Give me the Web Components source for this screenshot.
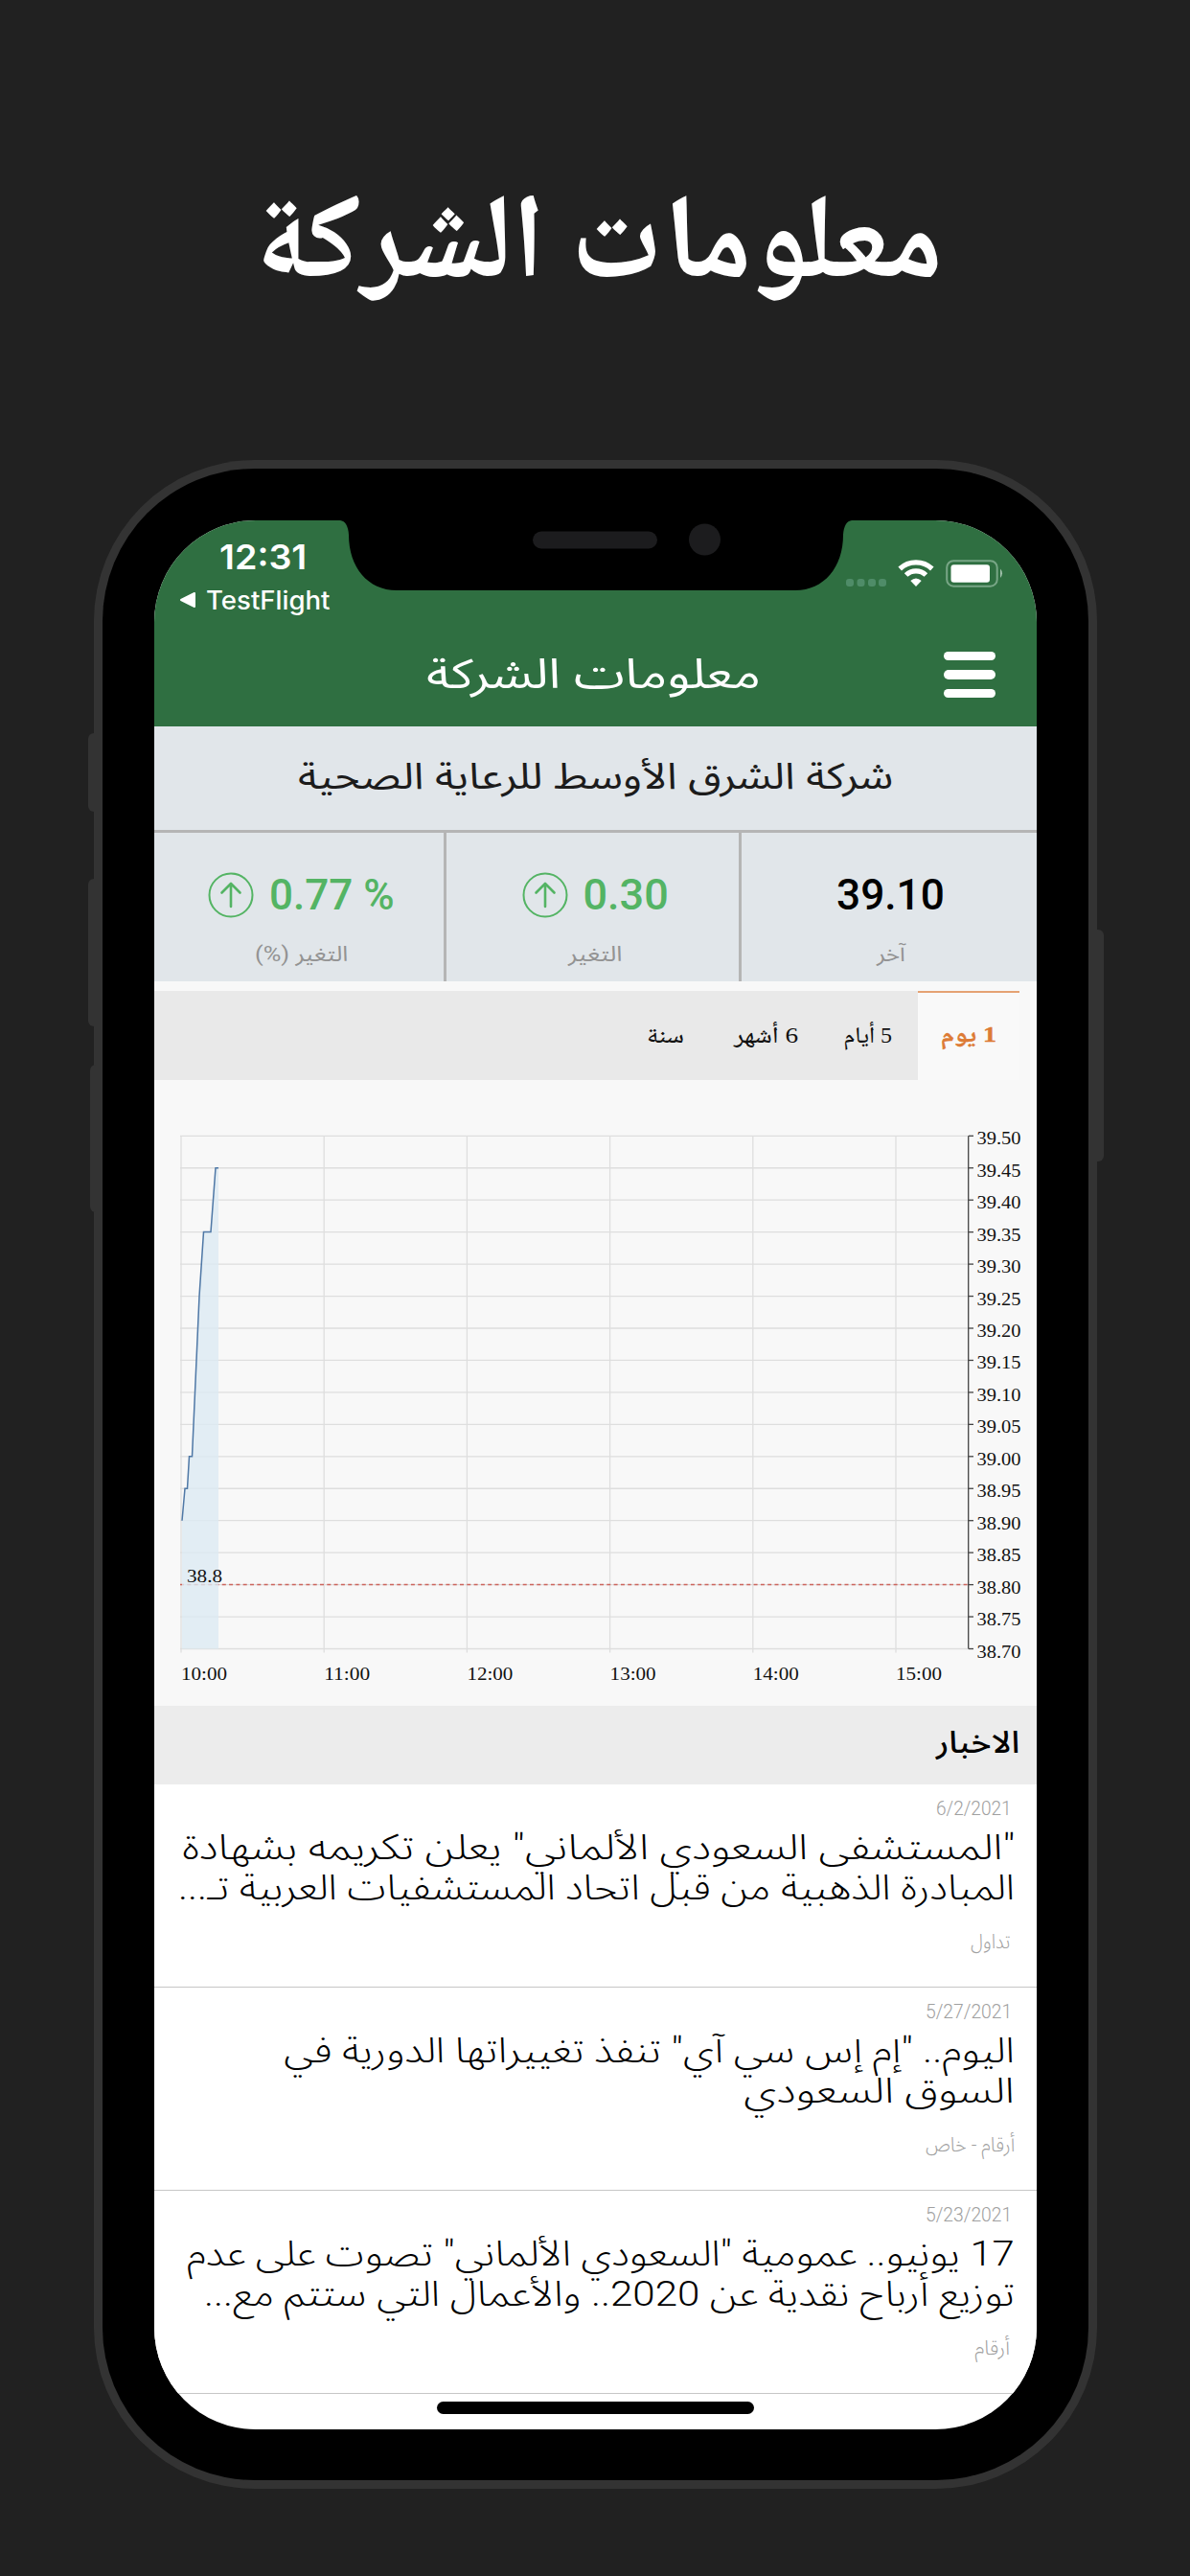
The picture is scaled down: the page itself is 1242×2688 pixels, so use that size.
<!DOCTYPE html>
<html lang="ar">
<head>
<meta charset="utf-8">
<title>معلومات الشركة</title>
<style>
    html, body { margin: 0; padding: 0; }
    body { width: 1242px; height: 2688px; overflow: hidden; background: #212121; }
</style>
</head>
<body>
<promo-headline>معلومات الشركة</promo-headline>
<phone-frame>
    <status-bar time="12:31" back="TestFlight"></status-bar>
    <app-header>معلومات الشركة</app-header>
    <stock-summary name="شركة الشرق الأوسط للرعاية الصحية">
        <stat-cell value="39.10" value-width="113" label="آخر" label-width="30"></stat-cell>
        <stat-cell value="0.30" value-width="89" label="التغير" label-width="57" up></stat-cell>
        <stat-cell value="0.77 %" value-width="131" label="التغير (%)" label-width="97" up></stat-cell>
    </stock-summary>
    <range-tabs></range-tabs>
    <price-chart></price-chart>
    <news-list heading="الاخبار">
        <news-item date="6/2/2021" date-width="79" source="تداول" source-width="41" indent="5">
            <fit-text width="869">"المستشفى السعودي الألماني" يعلن تكريمه بشهادة</fit-text>
            <fit-text width="873">المبادرة الذهبية من قبل اتحاد المستشفيات العربية تـ...</fit-text>
        </news-item>
        <news-item date="5/27/2021" date-width="90" source="أرقام - خاص" source-width="93">
            <fit-text width="763">اليوم.. "إم إس سي آي" تنفذ تغييراتها الدورية في</fit-text>
            <fit-text width="283">السوق السعودي</fit-text>
        </news-item>
        <news-item date="5/23/2021" date-width="90" source="أرقام" source-width="37" indent="5">
            <fit-text width="864">17 يونيو.. عمومية "السعودي الألماني" تصوت على عدم</fit-text>
            <fit-text width="846">توزيع أرباح نقدية عن 2020.. والأعمال التي ستتم مع...</fit-text>
        </news-item>
    </news-list>
</phone-frame>

<script>
const AR = '"Noto Sans Arabic", "Noto Kufi Arabic", "DejaVu Sans", sans-serif';
const NASKH = '"Noto Naskh Arabic", "Noto Serif Arabic", "Amiri", "DejaVu Sans", serif';

/**
 * One line of text, squeezed or stretched to a given width
 * <fit-text width="120">text</fit-text>
 */
class FitText extends HTMLElement {
    constructor() {
        super();
        this.attachShadow({ mode: 'open' });
        this.shadowRoot.innerHTML = `
            <style>
                :host { display: block; white-space: nowrap; }
                span { display: inline-block; }
            </style>
            <span><slot></slot></span>
        `;
    }

    connectedCallback() {
        const width = parseFloat(this.getAttribute('width'));
        const span = this.shadowRoot.querySelector('span');
        const rtl = getComputedStyle(this).direction === 'rtl';
        this.style.width = width + 'px';
        span.style.transformOrigin = rtl ? 'right center' : 'left center';
        span.style.transform = `scaleX(${width / span.offsetWidth})`;
    }
}

class PromoHeadline extends HTMLElement {
    connectedCallback() {
        this.attachShadow({ mode: 'open' }).innerHTML = `
            <style>
                :host { display: flex; justify-content: center; box-sizing: border-box; height: 480px; padding: 192px 0 0 8px; direction: rtl; color: #fff; font: 700 125px/140px ${NASKH}; }
            </style>
            <fit-text width="717"><slot></slot></fit-text>
        `;
    }
}

class PhoneFrame extends HTMLElement {
    connectedCallback() {
        this.attachShadow({ mode: 'open' }).innerHTML = `
            <style>
                :host { display: block; position: relative; box-sizing: border-box; width: 1047px; height: 2117px; margin-left: 98px; padding: 9px; border-radius: 168px; background: #333; }
                .bezel { box-sizing: border-box; height: 2099px; padding: 54px 54px 53px; border-radius: 159px; background: #000; }
                .screen { width: 921px; height: 1992px; border-radius: 106px; overflow: hidden; background: #fff; }
                .notch { position: absolute; left: 254px; top: 62px; }
                .btn { position: absolute; left: -6px; width: 12px; border-radius: 6px 0 0 6px; background: #333; }
                .home { position: absolute; left: 358px; top: 2026px; width: 331px; height: 13px; border-radius: 7px; background: #000; }
            </style>
            <i class="btn" style="top:285px;height:82px"></i>
            <i class="btn" style="top:437px;height:154px"></i>
            <i class="btn" style="top:631px;height:154px;left:-4px"></i>
            <i class="btn" style="top:490px;height:242px;left:auto;right:-7px;border-radius:0 6px 6px 0"></i>
            <div class="bezel"><div class="screen"><slot></slot></div></div>
            <svg class="notch" width="540" height="76" viewBox="0 0 540 76">
                <path d="M0 0V1H3Q11 2 12 16C12 50 32 74 62 74H478C508 74 528 50 528 16Q529 2 537 1H540V0Z"/>
                <rect x="204" y="12.500" width="130" height="18" rx="9" fill="#1c1c1e"/>
                <circle cx="383.500" cy="21" r="16.500" fill="#1c1c1e"/>
            </svg>
            <i class="home"></i>
        `;
    }
}

class StatusBar extends HTMLElement {
    connectedCallback() {
        this.attachShadow({ mode: 'open' }).innerHTML = `
            <style>
                :host { display: flex; justify-content: space-between; box-sizing: border-box; height: 110px; padding: 16px 35px 0 26px; background: #2f6f41; color: #fff; font-family: Inter, "Liberation Sans", sans-serif; }
                .left { display: flex; flex-direction: column; }
                .time { padding-left: 42px; font-size: 36px; font-weight: 600; line-height: 44px; }
                .back { display: flex; align-items: center; gap: 11px; height: 46px; font-size: 26.500px; font-weight: 500; }
                .icons { display: flex; padding-top: 23px; }
            </style>
            <div class="left">
                <fit-text class="time" width="91">${this.getAttribute('time')}</fit-text>
                <div class="back">
                    <svg width="17" height="18" viewBox="0 0 17 18"><path d="M2 9L16 2V16Z" fill="#fff" stroke="#fff" stroke-width="2" stroke-linejoin="round"/></svg>
                    <fit-text width="129">${this.getAttribute('back')}</fit-text>
                </div>
            </div>
            <svg class="icons" width="166" height="32" viewBox="0 0 166 32">
                <g fill="#4f8c68">
                    <rect x="2" y="22" width="8" height="8" rx="3"/>
                    <rect x="13.500" y="22" width="8" height="8" rx="3"/>
                    <rect x="25" y="22" width="8" height="8" rx="3"/>
                    <rect x="36" y="22" width="8" height="8" rx="3"/>
                </g>
                <g fill="none" stroke="#fff" stroke-width="5.200">
                    <path d="M58.200 11.500A24.500 24.500 0 0 1 91.800 11.500"/>
                    <path d="M64.600 18A15 15 0 0 1 85.400 18"/>
                </g>
                <path d="M69.300 24Q75 18.800 80.700 24L75 30Z" fill="#fff"/>
                <rect x="107.200" y="3.200" width="52.500" height="26.500" rx="7" fill="none" stroke="#78a686" stroke-width="2"/>
                <rect x="111.500" y="7.300" width="40.500" height="18.500" rx="3" fill="#fff"/>
                <path d="M163 11.500Q167 16 163 21Z" fill="#a0c0aa"/>
            </svg>
        `;
    }
}

class AppHeader extends HTMLElement {
    connectedCallback() {
        this.attachShadow({ mode: 'open' }).innerHTML = `
            <style>
                :host { display: flex; direction: rtl; align-items: flex-start; box-sizing: border-box; height: 105px; padding: 16px 43px 0; background: #2f6f41; color: #fff; font: 400 43px/72px ${AR}; }
                .menu { display: flex; flex-direction: column; gap: 10.500px; width: 54px; padding-top: 10.500px; margin-left: 191px; }
                .menu i { height: 9.300px; border-radius: 5px; background: #fff; }
            </style>
            <div class="menu"><i></i><i></i><i></i></div>
            <fit-text width="349"><slot></slot></fit-text>
        `;
    }
}

class StatCell extends HTMLElement {
    connectedCallback() {
        const a = n => this.getAttribute(n);
        const arrow = `<svg width="48" height="48" viewBox="0 0 48 48" fill="none" stroke="#54b464" stroke-linecap="round" stroke-linejoin="round">
            <circle cx="24" cy="24" r="22.500" stroke-width="2"/><path d="M24 36V12M14.500 21.500L24 12L33.500 21.500" stroke-width="2.600"/></svg>`;
        this.attachShadow({ mode: 'open' }).innerHTML = `
            <style>
                :host { display: flex; flex-direction: column; align-items: center; box-sizing: border-box; padding: 40px 0 0 3px; color: #000; }
                :host([up]) { color: #54b464; padding-left: 5px; }
                .value { display: flex; align-items: center; gap: 16px; height: 50px; font: 500 45px/50px Roboto, sans-serif; }
                .label { margin-top: 17px; direction: rtl; color: #939393; font: 400 22px/40px Roboto, ${AR}; }
            </style>
            <div class="value">${this.hasAttribute('up') ? arrow : ''}<fit-text width="${a('value-width')}">${a('value')}</fit-text></div>
            <fit-text class="label" width="${a('label-width')}">${a('label')}</fit-text>
        `;
    }
}

class StockSummary extends HTMLElement {
    connectedCallback() {
        this.attachShadow({ mode: 'open' }).innerHTML = `
            <style>
                :host { display: block; direction: rtl; background: #e1e6ea; }
                .name { display: flex; justify-content: center; box-sizing: border-box; height: 108px; padding-top: 18px; color: #1c1c1c; font: 400 38px/70px ${AR}; }
                .cells { display: grid; grid-template-columns: 308px 305px 302px; column-gap: 3px; height: 155px; border-top: 3px solid #b5b5b5; background: #b5b5b5; }
                ::slotted(*) { background: #e1e6ea; direction: ltr; }
            </style>
            <div class="name"><fit-text width="621">${this.getAttribute('name')}</fit-text></div>
            <div class="cells"><slot></slot></div>
        `;
    }
}

class RangeTabs extends HTMLElement {
    connectedCallback() {
        this.attachShadow({ mode: 'open' }).innerHTML = `
            <style>
                :host { display: block; direction: rtl; padding: 10px 18px 0 0; background: #f8f8f8; color: #111; font: 500 24px/50px "Liberation Serif", ${NASKH}; }
                .bar { display: flex; align-items: flex-start; height: 93px; background: #e9e9e9; }
                .bar > * { padding-top: 21px; }
                .bar > .on { display: flex; justify-content: center; box-sizing: border-box; width: 106px; height: 93px; padding-top: 18px; border-top: 2px solid #e5a273; background: #f9f9f9; color: #dd7b35; font-weight: 700; -webkit-text-stroke: .4px #dd7b35; margin-left: 27px; }
            </style>
            <div class="bar">
                <div class="on"><fit-text width="58">1 يوم</fit-text></div>
                <fit-text width="51" style="margin-left:47px">5 أيام</fit-text>
                <fit-text width="67" style="margin-left:52px">6 أشهر</fit-text>
                <fit-text width="39">سنة</fit-text>
            </div>
        `;
    }
}

/**
 * Price of the day: grid, previous close, area and axis labels
 */
class PriceChart extends HTMLElement {
    connectedCallback() {
        const top = 58.300, step = 33.450, bottom = top + step * 16;
        let grid = '', labels = '', ticks = '';
        for (let i = 0; i <= 16; i++) {
            const y = top + step * i;
            grid += `<path d="M27 ${y}H850"/>`;
            ticks += `<path d="M850 ${y}H855"/>`;
            labels += `<text x="858.500" y="${y + 9}" textLength="46" lengthAdjust="spacingAndGlyphs">${(39.5 - i * 0.05).toFixed(2)}</text>`;
        }
        for (let i = 0; i < 6; i++) {
            const x = 28 + 149.200 * i;
            grid += `<path d="M${x} ${top}V${bottom + 4}"/>`;
            labels += `<text x="${x}" y="${bottom + 32}" textLength="48" lengthAdjust="spacingAndGlyphs">${10 + i}:00</text>`;
        }
        // x in pixels, price
        const points = [[29, 38.9], [32, 38.95], [34.5, 38.95], [36.5, 39], [39.5, 39], [47, 39.25], [51.5, 39.35], [59, 39.35], [64, 39.45], [67, 39.45]];
        const line = 'M' + points.map(([x, p]) => `${x} ${(top + (39.5 - p) / 0.05 * step).toFixed(1)}`).join('L');
        this.attachShadow({ mode: 'open' }).innerHTML = `
            <style>
                :host { display: block; height: 653px; background: #f8f8f8; }
                svg { display: block; }
                text { font: 18px "Liberation Serif", serif; fill: #111; }
            </style>
            <svg width="921" height="653" viewBox="0 0 921 653" fill="none">
                <g stroke="#dedede" stroke-width="1.300">${grid}</g>
                <path d="M27 ${top + step * 14}H850" stroke="#cc645c" stroke-width="1.500" stroke-dasharray="4 3.300"/>
                <path d="${line}V${bottom}H29Z" fill="#dceaf3" fill-opacity=".8"/>
                <path d="${line}" stroke="#4f78a6" stroke-width="1.500"/>
                <g stroke="#444" stroke-width="1.300"><path d="M849.700 ${top}V${bottom}"/>${ticks}</g>
                ${labels}
                <text x="34" y="524" textLength="37" lengthAdjust="spacingAndGlyphs">38.8</text>
            </svg>
        `;
    }
}

class NewsItem extends HTMLElement {
    connectedCallback() {
        const a = n => this.getAttribute(n);
        this.attachShadow({ mode: 'open' }).innerHTML = `
            <style>
                :host { display: block; box-sizing: border-box; height: 212px; padding: 11px 23px 0 0; border-bottom: 1px solid #c6c6c6; background: #fff; color: #000; font-family: ${AR}; }
                .meta { color: #a0a0a0; font: 300 21px/28px Roboto, ${AR}; }
                .date { direction: ltr; margin-right: 3px; }
                .text { height: 98px; padding-top: 6px; font: 300 37px/41.500px Roboto, ${AR}; }
                .source { margin-top: 7px; }
            </style>
            <fit-text class="meta date" width="${a('date-width')}">${a('date')}</fit-text>
            <div class="text"><slot></slot></div>
            <fit-text class="meta source" style="margin-right:${a('indent') || 0}px" width="${a('source-width')}">${a('source')}</fit-text>
        `;
    }
}

class NewsList extends HTMLElement {
    connectedCallback() {
        this.attachShadow({ mode: 'open' }).innerHTML = `
            <style>
                :host { display: block; direction: rtl; }
                .head { box-sizing: border-box; height: 82px; padding: 11px 18px 0; background: #ececec; color: #000; font: 500 32px/56px ${AR}; }
                ::slotted(*) { font: 300 37px/41.500px Roboto, ${AR}; }
            </style>
            <div class="head"><fit-text width="87">${this.getAttribute('heading')}</fit-text></div>
            <slot></slot>
        `;
    }
}

// containers first, so that fit-text measures with the final fonts
customElements.define('promo-headline', PromoHeadline);
customElements.define('phone-frame', PhoneFrame);
customElements.define('status-bar', StatusBar);
customElements.define('app-header', AppHeader);
customElements.define('stock-summary', StockSummary);
customElements.define('stat-cell', StatCell);
customElements.define('range-tabs', RangeTabs);
customElements.define('price-chart', PriceChart);
customElements.define('news-list', NewsList);
customElements.define('news-item', NewsItem);
customElements.define('fit-text', FitText);
</script>
</body>
</html>
